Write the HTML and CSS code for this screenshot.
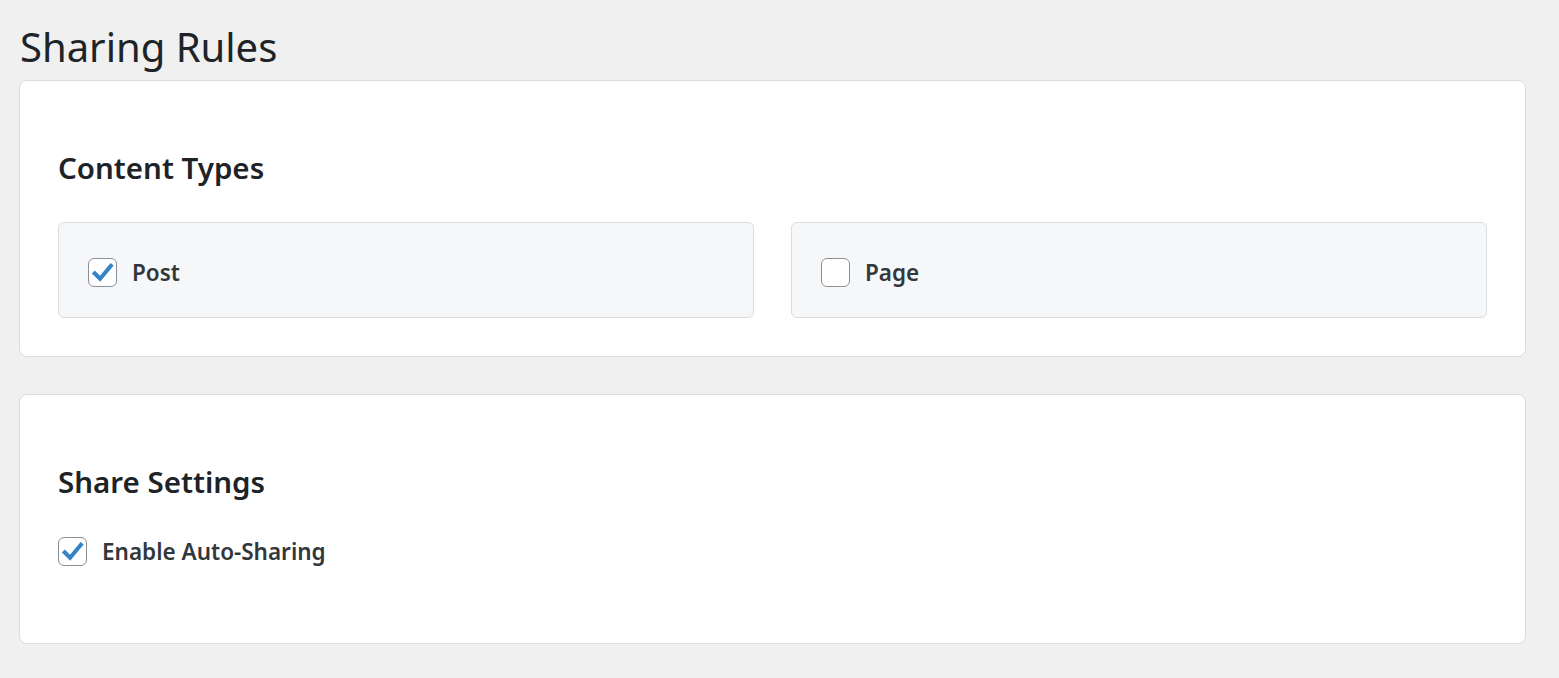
FILE: index.html
```html
<!DOCTYPE html>
<html lang="en">
<head>
    <meta charset="UTF-8">
    <meta name="viewport" content="width=device-width, initial-scale=1.0">
    <title>Sharing Rules</title>
    <link rel="stylesheet" href="styles.css">
</head>
<body>
    <div class="wrap">
        <h1 class="page-title">Sharing Rules</h1>

        <div class="card">
            <h2 class="card-title">Content Types</h2>
            <div class="type-grid">
                <label class="type-box">
                    <span class="checkbox checked">
                        <svg viewBox="0 0 28 28" width="28" height="28"><path d="M4.5 14 L11.5 21 L24 6" fill="none" stroke="#3582c4" stroke-width="4.2"/></svg>
                    </span>
                    <span class="label-text">Post</span>
                </label>
                <label class="type-box">
                    <span class="checkbox"></span>
                    <span class="label-text">Page</span>
                </label>
            </div>
        </div>

        <div class="card card-settings">
            <h2 class="card-title">Share Settings</h2>
            <label class="option-row">
                <span class="checkbox checked">
                    <svg viewBox="0 0 28 28" width="28" height="28"><path d="M4.5 14 L11.5 21 L24 6" fill="none" stroke="#3582c4" stroke-width="4.2"/></svg>
                </span>
                <span class="label-text">Enable Auto-Sharing</span>
            </label>
        </div>
    </div>
</body>
</html>
```

FILE: styles.css
```css
body {
    margin: 0;
    background-color: #f0f0f1;
    font-family: "Noto Sans", "Open Sans", sans-serif;
    color: #1d2327;
}
.wrap {
    padding: 20px 33px 30px 19px;
}
.page-title {
    margin: 0 0 0 1px;
    font-size: 40px;
    font-weight: 400;
    line-height: 54px;
    height: 60px;
}
.card {
    background-color: #fff;
    border: 1px solid #dcdcde;
    border-radius: 8px;
    padding: 67px 38px 38px 38px;
    margin-bottom: 37px;
}
.card-title {
    margin: 0 0 34px 0;
    font-size: 29.5px;
    font-weight: 600;
    line-height: 40px;
}
.type-grid {
    display: grid;
    grid-template-columns: 1fr 1fr;
    gap: 37px;
}
.type-box {
    display: flex;
    align-items: center;
    gap: 15px;
    box-sizing: border-box;
    height: 96px;
    padding: 4px 29px 0 29px;
    background-color: #f6f7f9;
    border: 1px solid #dcdcde;
    border-radius: 6px;
}
.checkbox {
    display: flex;
    align-items: center;
    justify-content: center;
    box-sizing: border-box;
    width: 29px;
    height: 29px;
    border: 1px solid #8c8f94;
    border-radius: 6px;
    background-color: #fff;
    flex-shrink: 0;
}
.checkbox svg {
    display: block;
}
.label-text {
    font-size: 22.5px;
    font-weight: 600;
    color: #32373c;
}
.card-settings {
    padding-bottom: 77px;
}
.option-row {
    display: flex;
    align-items: center;
    gap: 15px;
    height: 30px;
}
```
